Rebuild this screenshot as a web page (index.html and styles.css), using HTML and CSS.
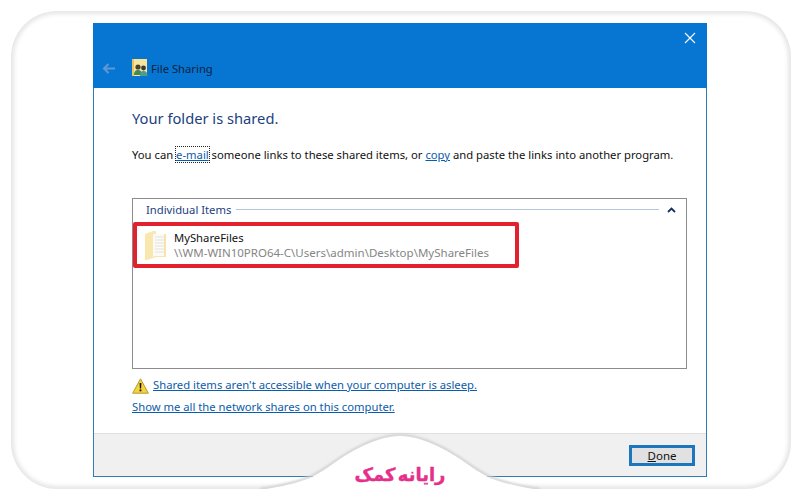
FILE: index.html
```html
<!DOCTYPE html>
<html lang="en">
<head>
  <meta charset="UTF-8">
  <title>File Sharing</title>
  <link rel="stylesheet" href="styles.css">
</head>
<body>
  <div class="frame">
    <div class="window">
      <div class="title-bar">
        <div class="close-row">
          <svg class="close-icon" width="12" height="12" viewBox="0 0 12 12"><path d="M1 1L11 11M11 1L1 11" stroke="#fff" stroke-width="1.1" fill="none"/></svg>
        </div>
        <div class="title-row">
          <svg class="back-icon" width="13" height="11" viewBox="0 0 13 11"><path d="M13 5.5H2M6.5 1L2 5.5L6.5 10" stroke="#5f98d2" stroke-width="2" fill="none"/></svg>
          <svg class="share-icon" width="16" height="18" viewBox="0 0 16 18">
            <rect x="0" y="0" width="15" height="17" fill="#f8e59c"/>
            <rect x="0" y="0" width="2" height="17" fill="#e6c65c"/>
            <circle cx="6" cy="8" r="2.6" fill="#4a4030"/>
            <path d="M2 16c0-4 2-5 4-5s4 1 4 5z" fill="#3f8a5a"/>
            <circle cx="11.5" cy="9" r="2.4" fill="#3a3a38"/>
            <path d="M8 17c0-4 1.500-5 3.500-5s4 1 4 5z" fill="#4f9c8a"/>
          </svg>
          <span class="title-text">File Sharing</span>
        </div>
      </div>

      <div class="content">
        <h1>Your folder is shared.</h1>
        <p class="intro">You can <a class="focused" href="#">e-mail</a> someone links to these shared items, or <a href="#">copy</a> and paste the links into another program.</p>

        <div class="items-panel">
          <div class="group-header">
            <span class="group-name">Individual Items</span>
            <span class="group-line"></span>
            <svg class="chevron" width="9" height="6" viewBox="0 0 9 6"><path d="M1 5L4.500 1.500L8 5" stroke="#14315f" stroke-width="1.800" fill="none"/></svg>
          </div>
          <div class="item-row">
            <svg class="folder-icon" width="23" height="29" viewBox="0 0 23 29">
              <path d="M0 3L8 0H11V26L2 29H0z" fill="#fae7b0"/>
              <rect x="8" y="3" width="13" height="23" fill="#fbfaf4"/>
              <path d="M10 6h9M10 9h9M10 12h9M10 15h9M10 18h9M10 21h9" stroke="#e3e3e0" stroke-width="1"/>
              <path d="M19 3h2v23H8l2-1h9z" fill="#f9e3a6"/>
            </svg>
            <div class="item-text">
              <div class="item-name">MyShareFiles</div>
              <div class="item-path">\\WM-WIN10PRO64-C\Users\admin\Desktop\MyShareFiles</div>
            </div>
          </div>
        </div>

        <div class="warning-row">
          <svg class="warning-icon" width="17" height="16" viewBox="0 0 17 16">
            <path d="M8.500 .8L16.300 15.200H.7z" fill="#f5d33f" stroke="#b8992a" stroke-width="1"/>
            <path d="M7.600 5H9.400L9.100 10.500H7.900z" fill="#111"/>
            <rect x="7.600" y="11.500" width="1.800" height="1.800" fill="#111"/>
          </svg>
          <a href="#">Shared items aren't accessible when your computer is asleep.</a>
        </div>
        <div class="shares-row"><a href="#">Show me all the network shares on this computer.</a></div>
      </div>

      <div class="footer">
        <button class="done-button"><u>D</u>one</button>
      </div>
    </div>

    <div class="notch">
      <svg width="280" height="60" viewBox="0 0 280 60">
        <defs>
          <filter id="soft" x="-5%" y="-20%" width="110%" height="140%"><feGaussianBlur stdDeviation="1.2"/></filter>
        </defs>
        <path d="M0 59C14 57 36 53 50 47C62 41 70 35 80 28C92 20 118 5 140 5C162 5 188 20 200 28C210 35 218 41 230 47C244 53 266 57 280 59" stroke="#d2d2d2" stroke-width="2.500" fill="none" filter="url(#soft)"/>
        <path d="M0 60C14 58 36 54 50 48C62 42 70 36 80 29C92 21 118 6 140 6C162 6 188 21 200 29C210 36 218 42 230 48C244 54 266 58 280 60z" fill="#fff"/>
      </svg>
      <span class="logo" lang="fa" dir="rtl">رایانه کمک</span>
    </div>
  </div>
</body>
</html>
```

FILE: styles.css
```css
body {
  margin: 0;
  background-color: #fff;
  font-family: "Noto Sans", sans-serif;
  font-size: 11.25px;
  color: #111;
}

a {
  color: #0b5cab;
}

.frame {
  position: relative;
  box-sizing: border-box;
  width: 780px;
  height: 478px;
  margin: 11px 0 0 11px;
  padding: 12px 0 0 82px;
  border-radius: 46px;
  box-shadow: inset 0 0 4px 3px #e6e6e6;
}

.window {
  display: flex;
  flex-direction: column;
  box-sizing: border-box;
  width: 614px;
  height: 454px;
  background-color: #fff;
  border: 1px solid #2f7db5;
  border-top: none;
}

.title-bar {
  display: flex;
  flex-direction: column;
  height: 65px;
  margin: 0 -1px;
  background-color: #0776d3;
}

.close-row {
  display: flex;
  justify-content: flex-end;
  padding: 9px 11px 0 0;
}

.title-row {
  display: flex;
  align-items: center;
  padding: 15px 0 0 9px;
}

.back-icon {
  margin-right: 17px;
}

.share-icon {
  margin-right: 3px;
}

.title-text {
  color: #0c2340;
}

.content {
  flex: 1;
  padding: 0 19px 0 38px;
}

h1 {
  margin: 19px 0 0;
  font-size: 14.7px;
  font-weight: 400;
  line-height: 22px;
  color: #1c3f80;
}

.intro {
  margin: 18px 0 0;
  line-height: 16px;
  white-space: nowrap;
}

.focused {
  outline: 1px dotted #222;
}

.items-panel {
  box-sizing: border-box;
  height: 171px;
  margin-top: 35px;
  padding: 0;
  border: 1px solid #8c8c8c;
}

.group-header {
  display: flex;
  align-items: center;
  height: 20px;
  padding: 0 10px 0 13px;
}

.group-name {
  color: #1c3f80;
}

.group-line {
  flex: 1;
  height: 1px;
  margin: 1px 8px 0 5px;
  background-color: #b5c7dc;
}

.chevron {
  margin-top: 1px;
}

.item-row {
  display: flex;
  align-items: center;
  box-sizing: border-box;
  width: 386px;
  height: 46px;
  margin: 3px 0 0;
  padding: 0 0 0 8px;
  border: 4px solid #e2202e;
  border-radius: 2px;
}

.folder-icon {
  margin-right: 6px;
}

.item-name {
  line-height: 15px;
}

.item-path {
  font-size: 11.5px;
  line-height: 15px;
  color: #858585;
}

.warning-row {
  display: flex;
  align-items: center;
  gap: 4px;
  margin-top: 7px;
  line-height: 18px;
}

.warning-icon {
  margin-top: 2px;
}

.shares-row {
  margin-top: 4px;
  line-height: 18px;
}

.footer {
  display: flex;
  justify-content: flex-end;
  align-items: flex-start;
  box-sizing: border-box;
  height: 43px;
  padding: 11px 11px 0 0;
  background-color: #f0f0f0;
  border-top: 1px solid #dfdfdf;
}

.done-button {
  box-sizing: border-box;
  width: 66px;
  height: 21px;
  padding: 0;
  background-color: #e1e1e1;
  border: 3px solid #1c76bd;
  font-family: "Noto Sans", sans-serif;
  font-size: 11.5px;
  line-height: 14px;
  color: #111;
}

.notch {
  position: absolute;
  left: 249px;
  bottom: -1px;
  width: 280px;
  height: 60px;
}

.notch svg {
  display: block;
}

.logo {
  position: absolute;
  left: 0;
  right: 0;
  bottom: 2px;
  text-align: center;
  font-family: "DejaVu Sans", sans-serif;
  font-size: 18px;
  font-weight: 700;
  line-height: 26px;
  word-spacing: -4px;
  color: #e5308b;
  -webkit-text-stroke: 0.4px #e5308b;
}
```
